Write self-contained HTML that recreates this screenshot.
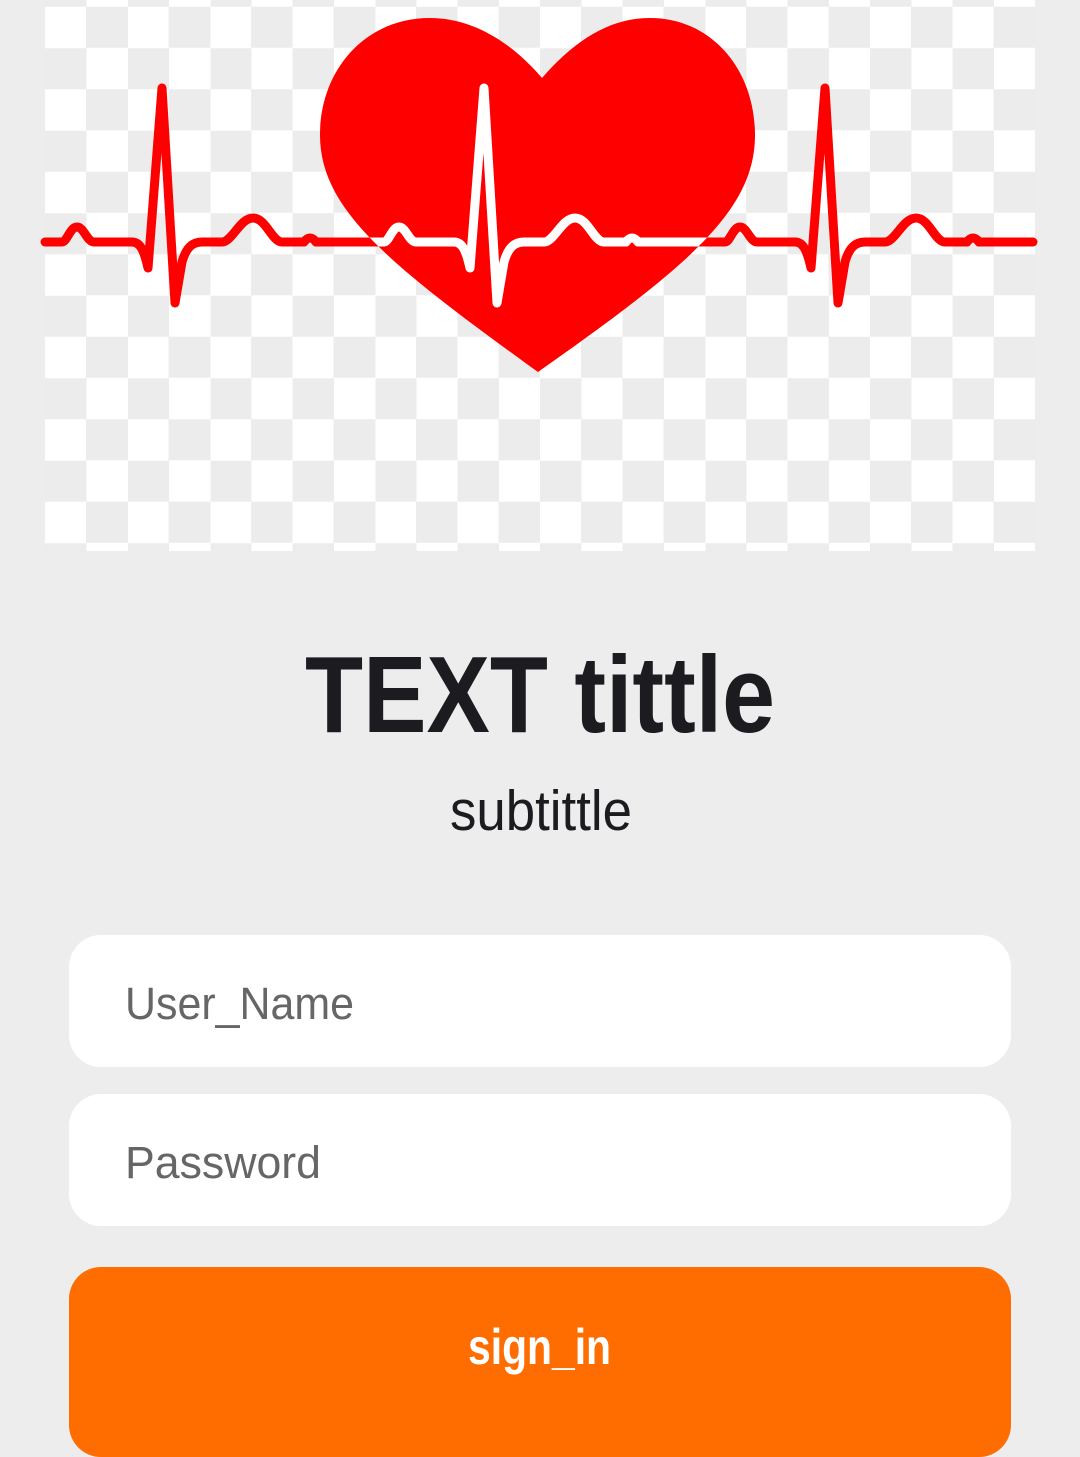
<!DOCTYPE html>
<html><head><meta charset="utf-8">
<style>
html,body{margin:0;padding:0;}
body{width:1080px;height:1418px;background:#ededed;position:relative;overflow:hidden;font-family:"Liberation Sans",sans-serif;}
.checker{position:absolute;left:45px;top:0;width:990px;height:551px;
background:conic-gradient(#ececec 25%,#fff 0 50%,#ececec 0 75%,#fff 0);
background-size:82.5px 82.5px;background-position:0 6.75px;}
.box{position:absolute;left:69px;width:942px;background:#fff;border-radius:32px;}
.btn{position:absolute;left:69px;top:1267px;width:942px;height:190px;background:#ff6d00;border-radius:32px;}
svg{position:absolute;left:0;top:0;}
</style></head><body>
<div class="checker"></div>
<div class="box" style="top:935px;height:132px"></div>
<div class="box" style="top:1094px;height:132px"></div>
<div class="btn"></div>
<svg width="1080" height="1418" viewBox="0 0 1080 1418">
<defs>
<clipPath id="hc"><path d="M542,78 C510,40 470,18 430,18 C365,18 320,70 320,135 C320,210 390,265 538,372 C690,265 755,210 755,135 C755,70 712,18 650,18 C610,18 575,40 542,78 Z"/></clipPath>
</defs>
<path d="M542,78 C510,40 470,18 430,18 C365,18 320,70 320,135 C320,210 390,265 538,372 C690,265 755,210 755,135 C755,70 712,18 650,18 C610,18 575,40 542,78 Z" fill="#ff0000"/>
<g fill="none" stroke-width="9" stroke-linejoin="round" stroke-linecap="round">
<path stroke="#ff0000" d="M45,242 L62,242 C67,242 70,227 77,227 C84,227 87,242 94,242 L132,242 C140,242 144,250 148,268 L162,88 L175,303 L182,262 C186,248 192,242 202,242 L222,242 C232,242 240,218 253,218 C266,218 272,242 282,242 L304,242 Q310,234 316,242
L384,242 C389,242 392,227 399,227 C406,227 409,242 416,242 L454,242 C462,242 466,250 470,268 L484,88 L497,303 L504,262 C508,248 514,242 524,242 L544,242 C554,242 562,218 575,218 C588,218 594,242 604,242 L626,242 Q632,234 638,242
L725,242 C730,242 733,227 740,227 C747,227 750,242 757,242 L795,242 C803,242 807,250 811,268 L825,88 L838,303 L845,262 C849,248 855,242 865,242 L885,242 C895,242 903,218 916,218 C929,218 935,242 945,242 L967,242 Q973,234 979,242 L1033,242"/>
<path stroke="#ffffff" clip-path="url(#hc)" d="M45,242 L62,242 C67,242 70,227 77,227 C84,227 87,242 94,242 L132,242 C140,242 144,250 148,268 L162,88 L175,303 L182,262 C186,248 192,242 202,242 L222,242 C232,242 240,218 253,218 C266,218 272,242 282,242 L304,242 Q310,234 316,242
L384,242 C389,242 392,227 399,227 C406,227 409,242 416,242 L454,242 C462,242 466,250 470,268 L484,88 L497,303 L504,262 C508,248 514,242 524,242 L544,242 C554,242 562,218 575,218 C588,218 594,242 604,242 L626,242 Q632,234 638,242
L725,242 C730,242 733,227 740,227 C747,227 750,242 757,242 L795,242 C803,242 807,250 811,268 L825,88 L838,303 L845,262 C849,248 855,242 865,242 L885,242 C895,242 903,218 916,218 C929,218 935,242 945,242 L967,242 Q973,234 979,242 L1033,242"/>
</g>
<text x="305" y="732" font-family="'Liberation Sans Narrow','Liberation Sans',sans-serif" font-weight="bold" font-size="109" fill="#1c1b1f" textLength="470" lengthAdjust="spacingAndGlyphs">TEXT tittle</text>
<text x="450" y="830" font-family="'Liberation Sans Narrow','Liberation Sans',sans-serif" font-size="57" fill="#1c1b1f" textLength="182" lengthAdjust="spacingAndGlyphs">subtittle</text>
<text x="125" y="1019" font-family="'Liberation Sans',sans-serif" font-size="45" fill="#666666" textLength="229" lengthAdjust="spacingAndGlyphs">User_Name</text>
<text x="125" y="1178" font-family="'Liberation Sans',sans-serif" font-size="45" fill="#666666" textLength="196" lengthAdjust="spacingAndGlyphs">Password</text>
<text x="468" y="1364" font-family="'Liberation Sans Narrow','Liberation Sans',sans-serif" font-weight="bold" font-size="50" fill="#ffffff" textLength="143" lengthAdjust="spacingAndGlyphs">sign_in</text>
</svg>
</body></html>
